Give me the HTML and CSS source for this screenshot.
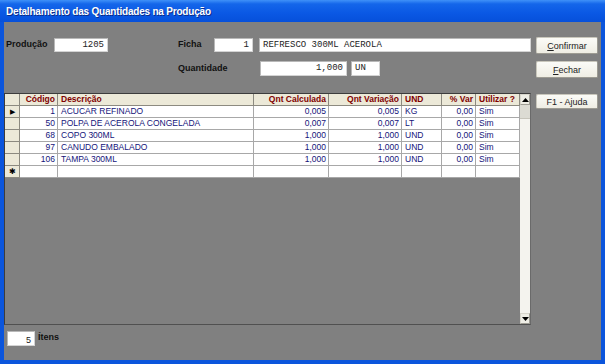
FILE: index.html
```html
<!DOCTYPE html>
<html lang="pt-BR">
<head>
<meta charset="UTF-8">
<title>Detalhamento das Quantidades na Produção</title>
<link rel="stylesheet" href="styles.css">
</head>
<body>

<div class="janela">
  <div class="titulo">Detalhamento das Quantidades na Produção</div>

  <div class="corpo">
    <div class="linha linha-1">
      <span class="rotulo rotulo-prod">Produção</span>
      <span class="caixa caixa-prod mono num">1205</span>
      <span class="rotulo rotulo-ficha">Ficha</span>
      <span class="caixa caixa-ficha mono num">1</span>
      <span class="caixa caixa-desc mono">REFRESCO 300ML ACEROLA</span>
      <button class="botao"><u>C</u>onfirmar</button>
    </div>

    <div class="linha linha-2">
      <span class="rotulo rotulo-qtd">Quantidade</span>
      <span class="caixa caixa-qtd mono num">1,000</span>
      <span class="caixa caixa-un mono">UN</span>
      <button class="botao"><u>F</u>echar</button>
    </div>

    <div class="principal">
      <div class="grade">
        <div class="tabela">
          <div class="cel ind"></div>
          <div class="cel cab dir">Código</div>
          <div class="cel cab">Descrição</div>
          <div class="cel cab dir">Qnt Calculada</div>
          <div class="cel cab dir">Qnt Variação</div>
          <div class="cel cab">UND</div>
          <div class="cel cab dir">% Var</div>
          <div class="cel cab">Utilizar ?</div>

          <div class="cel ind"><span class="seta">&#9654;</span></div>
          <div class="cel dir">1</div>
          <div class="cel">ACUCAR REFINADO</div>
          <div class="cel dir">0,005</div>
          <div class="cel dir">0,005</div>
          <div class="cel">KG</div>
          <div class="cel dir">0,00</div>
          <div class="cel">Sim</div>

          <div class="cel ind"></div>
          <div class="cel dir">50</div>
          <div class="cel">POLPA DE ACEROLA CONGELADA</div>
          <div class="cel dir">0,007</div>
          <div class="cel dir">0,007</div>
          <div class="cel">LT</div>
          <div class="cel dir">0,00</div>
          <div class="cel">Sim</div>

          <div class="cel ind"></div>
          <div class="cel dir">68</div>
          <div class="cel">COPO 300ML</div>
          <div class="cel dir">1,000</div>
          <div class="cel dir">1,000</div>
          <div class="cel">UND</div>
          <div class="cel dir">0,00</div>
          <div class="cel">Sim</div>

          <div class="cel ind"></div>
          <div class="cel dir">97</div>
          <div class="cel">CANUDO EMBALADO</div>
          <div class="cel dir">1,000</div>
          <div class="cel dir">1,000</div>
          <div class="cel">UND</div>
          <div class="cel dir">0,00</div>
          <div class="cel">Sim</div>

          <div class="cel ind"></div>
          <div class="cel dir">106</div>
          <div class="cel">TAMPA 300ML</div>
          <div class="cel dir">1,000</div>
          <div class="cel dir">1,000</div>
          <div class="cel">UND</div>
          <div class="cel dir">0,00</div>
          <div class="cel">Sim</div>

          <div class="cel ind"><span class="novo">&#10033;</span></div>
          <div class="cel"></div>
          <div class="cel"></div>
          <div class="cel"></div>
          <div class="cel"></div>
          <div class="cel"></div>
          <div class="cel"></div>
          <div class="cel"></div>
        </div>

        <div class="rolagem">
          <div class="rol-botao">
            <svg width="7" height="4" viewBox="0 0 7 4"><path d="M0 4 L3.5 0 L7 4 Z" fill="#000"/></svg>
          </div>
          <div class="rol-cursor"></div>
          <div class="rol-trilho"></div>
          <div class="rol-botao">
            <svg width="7" height="4" viewBox="0 0 7 4"><path d="M0 0 L7 0 L3.5 4 Z" fill="#000"/></svg>
          </div>
        </div>
      </div>

      <div class="lateral">
        <button class="botao">F1 - Ajuda</button>
      </div>
    </div>

    <div class="rodape">
      <span class="caixa caixa-itens num">5</span>
      <span class="rotulo">Ítens</span>
    </div>
  </div>
</div>

</body>
</html>
```

FILE: styles.css
```css
body {
  margin: 0;
  padding: 0;
  font-family: "Liberation Sans", Arial, sans-serif;
  background: #808080;
}

.janela {
  width: 605px;
  height: 364px;
  box-sizing: border-box;
  display: flex;
  flex-direction: column;
  background: #0b55dc;
}

.titulo {
  height: 22px;
  line-height: 23px;
  padding-left: 6px;
  color: #fff;
  font-weight: bold;
  font-size: 10px;
  letter-spacing: -0.2px;
  text-shadow: 1px 1px 0 #0a2c8a;
  background: linear-gradient(#3f91f8 0%, #1466ea 18%, #0a58e4 60%, #0650da 100%);
}

.corpo {
  flex: 1;
  margin: 0 4px 4px 4px;
  background: #808080;
  padding: 15px 3px 0 0;
  color: #111;
  font-size: 9px;
}

.linha {
  display: flex;
  align-items: flex-start;
}

.linha-2 {
  margin-top: 7px;
}

.rotulo {
  font-weight: bold;
  font-size: 9px;
  line-height: 12px;
  margin-top: 1px;
  color: #111;
}

.rotulo-prod {
  margin-left: 2px;
  width: 48px;
}

.rotulo-ficha {
  margin-left: 70px;
  width: 36px;
}

.rotulo-qtd {
  margin-left: 174px;
  width: 82px;
}

.caixa {
  display: block;
  box-sizing: border-box;
  height: 14px;
  margin-top: 1px;
  background: #fff;
  border: 1px solid #d4d4d4;
  border-top-color: #b8b8b8;
  border-left-color: #b8b8b8;
  line-height: 12px;
  padding: 0 3px;
  color: #222;
  white-space: nowrap;
}

.mono {
  font-family: "Liberation Mono", "Courier New", monospace;
  font-size: 9px;
}

.num {
  text-align: right;
}

.caixa-prod { width: 54px; }
.caixa-ficha { width: 39px; }
.caixa-desc { width: 272px; margin-left: 6px; }

.caixa-qtd { width: 87px; height: 15px; margin-top: 0; line-height: 13px; }
.caixa-un { width: 29px; height: 15px; margin-top: 0; line-height: 13px; margin-left: 4px; }

.botao {
  margin-left: auto;
  width: 62px;
  height: 17px;
  padding: 0;
  font-family: "Liberation Sans", Arial, sans-serif;
  font-size: 9px;
  color: #222;
  background: linear-gradient(#fbfbf7, #efede3);
  border: 1px solid #c9c7bc;
  border-right-color: #9d9b92;
  border-bottom-color: #9d9b92;
  border-radius: 2px;
}

.principal {
  display: flex;
  align-items: flex-start;
  margin-top: 15px;
}

.grade {
  display: flex;
  width: 527px;
  height: 232px;
  box-sizing: border-box;
  border: 1px solid #3c3c3c;
  border-right-color: #6a6a6a;
  border-bottom-color: #505050;
  background: #808080;
}

.tabela {
  display: grid;
  grid-template-columns: 15px 38px 196px 75px 73px 40px 34px 44px;
  grid-auto-rows: 12px;
  align-content: start;
  width: 515px;
}

.cel {
  box-sizing: border-box;
  border-right: 1px solid #a8a8a8;
  border-bottom: 1px solid #a8a8a8;
  background: #fff;
  font-size: 8.5px;
  line-height: 11px;
  padding: 0 2px 0 3px;
  color: #14147a;
  white-space: nowrap;
  overflow: hidden;
}

.cab {
  background: #ece9d8;
  color: #800000;
  font-weight: bold;
  border-right-color: #8c8a80;
  border-bottom-color: #8c8a80;
}

.dir {
  text-align: right;
}

.ind {
  background: #ece9d8;
  border-right-color: #8c8a80;
  border-bottom-color: #8c8a80;
  padding: 0;
  text-align: center;
  color: #000;
}

.seta {
  font-size: 7px;
  line-height: 11px;
}

.novo {
  font-size: 8px;
  line-height: 11px;
}

.rolagem {
  width: 10px;
  display: flex;
  flex-direction: column;
  background: #f4f3ee;
}

.rol-botao {
  height: 11px;
  box-sizing: border-box;
  display: flex;
  align-items: center;
  justify-content: center;
  background: #eeede5;
  border: 1px solid #d8d6cc;
  border-right-color: #9f9d94;
  border-bottom-color: #9f9d94;
}

.rol-cursor {
  height: 13px;
  background: #dcdbd3;
  border-bottom: 1px solid #c6c4ba;
}

.rol-trilho {
  flex: 1;
}

.lateral {
  margin-left: 5px;
  padding-top: 1px;
}

.lateral .botao {
  height: 15px;
}

.rodape {
  display: flex;
  align-items: flex-start;
  margin-top: 6px;
  padding-left: 3px;
}

.caixa-itens {
  width: 28px;
  height: 15px;
  margin-top: 0;
  line-height: 14px;
  font-size: 9px;
  padding-top: 1px;
}

.rodape .rotulo {
  margin-left: 3px;
  margin-top: 0;
}
```
